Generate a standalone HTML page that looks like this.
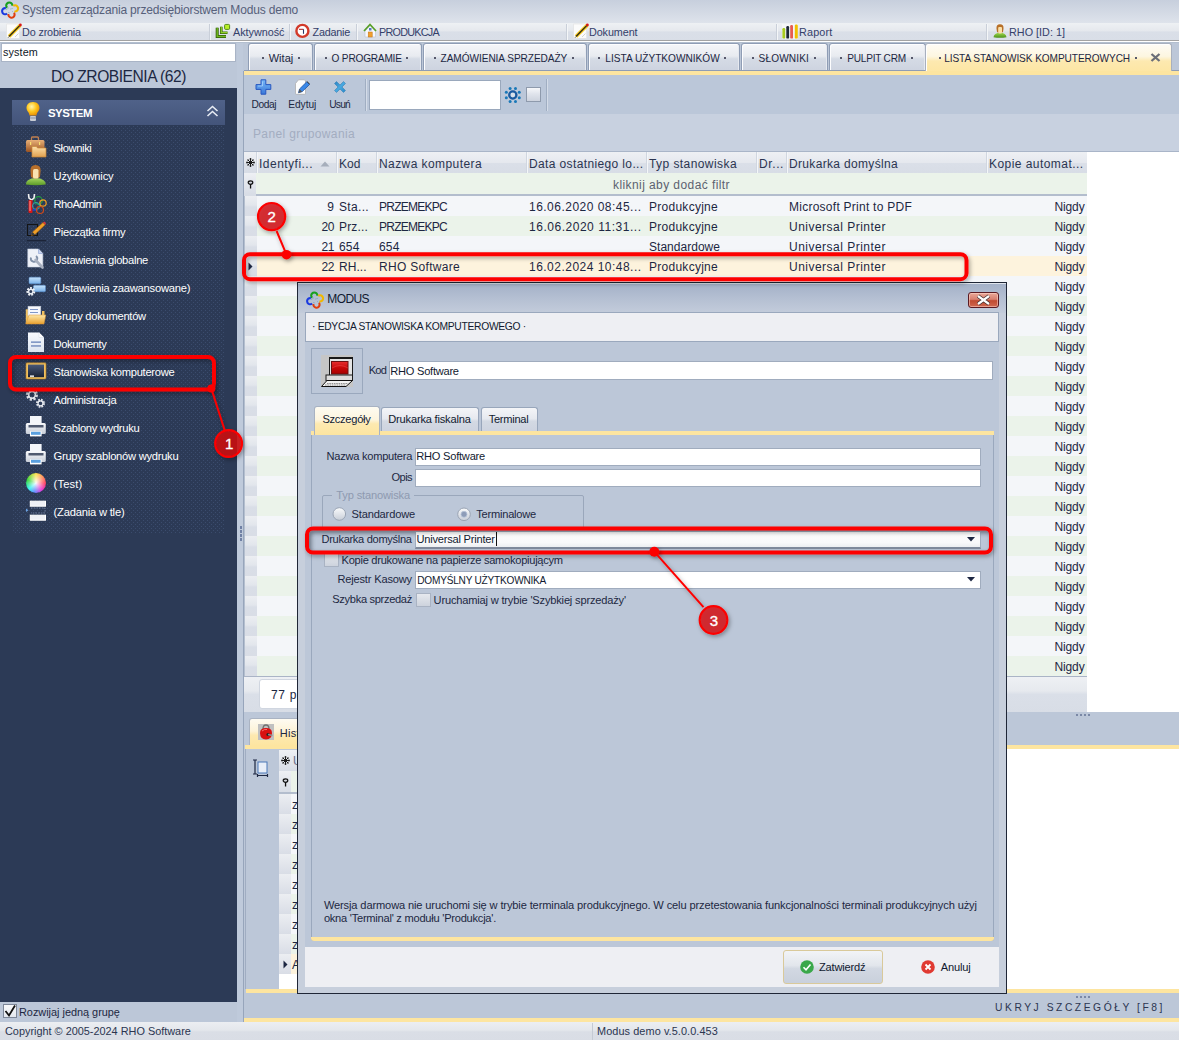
<!DOCTYPE html>
<html><head><meta charset="utf-8">
<style>
*{box-sizing:border-box;margin:0;padding:0}
html,body{width:1179px;height:1040px;overflow:hidden}
body{position:relative;background:#bcc7d8;font-family:"Liberation Sans",sans-serif;color:#1d2742;font-size:11px}
.a{position:absolute}
svg.a{overflow:visible}
.t{position:absolute;white-space:nowrap;line-height:1}
</style></head><body>
<div class="a" style="left:0px;top:0px;width:1179px;height:23px;background:linear-gradient(#c7cfdd,#dee3eb)"></div>
<div class="t" style="left:22px;top:4.44px;font-size:12px;color:#56607a;letter-spacing:-0.173px;">System zarządzania przedsiębiorstwem Modus demo</div>
<svg class="a" style="left:2px;top:2px;" width="17" height="17" viewBox="0 0 17 17"><circle cx="7.3" cy="3.6" r="3.1" fill="none" stroke="#18a020" stroke-width="2.1" stroke-dasharray="12.08 7.40" transform="rotate(-226.6 7.3 3.6)"/><circle cx="13.0" cy="6.4" r="3.1" fill="none" stroke="#f0b800" stroke-width="2.1" stroke-dasharray="12.08 7.40" transform="rotate(-126.6 13.0 6.4)"/><circle cx="9.5" cy="12.6" r="3.1" fill="none" stroke="#e04010" stroke-width="2.1" stroke-dasharray="12.08 7.40" transform="rotate(-36.6 9.5 12.6)"/><circle cx="3.2" cy="9.2" r="3.1" fill="none" stroke="#1a3ae0" stroke-width="2.1" stroke-dasharray="12.08 7.40" transform="rotate(53.4 3.2 9.2)"/><path d="M4.5 7.5 L6.5 6 M8.5 7 L10.5 6.5 M6.5 10.5 L8 11 M10.5 9.5 L11.5 10.5" stroke="#4a8aa0" stroke-width=".7" stroke-dasharray="1 .6"/></svg>
<div class="a" style="left:0px;top:23px;width:1179px;height:17px;background:linear-gradient(#eef1f4,#e5e8ed 47%,#dadfe8 52%,#d9dee7)"></div>
<div class="a" style="left:0px;top:40px;width:1179px;height:1px;background:#a3a3a3"></div>
<div class="a" style="left:0px;top:41px;width:1179px;height:1px;background:#ffffff"></div>
<div class="a" style="left:0px;top:42px;width:1179px;height:1px;background:#b3bfcf"></div>
<div class="a" style="left:209px;top:24px;width:1px;height:16px;background:#c9cfd9"></div>
<div class="a" style="left:210px;top:24px;width:1px;height:16px;background:#f4f6f8"></div>
<div class="a" style="left:289px;top:24px;width:1px;height:16px;background:#c9cfd9"></div>
<div class="a" style="left:290px;top:24px;width:1px;height:16px;background:#f4f6f8"></div>
<div class="a" style="left:356px;top:24px;width:1px;height:16px;background:#c9cfd9"></div>
<div class="a" style="left:357px;top:24px;width:1px;height:16px;background:#f4f6f8"></div>
<div class="a" style="left:566px;top:24px;width:1px;height:16px;background:#c9cfd9"></div>
<div class="a" style="left:567px;top:24px;width:1px;height:16px;background:#f4f6f8"></div>
<div class="a" style="left:776px;top:24px;width:1px;height:16px;background:#c9cfd9"></div>
<div class="a" style="left:777px;top:24px;width:1px;height:16px;background:#f4f6f8"></div>
<div class="a" style="left:986px;top:24px;width:1px;height:16px;background:#c9cfd9"></div>
<div class="a" style="left:987px;top:24px;width:1px;height:16px;background:#f4f6f8"></div>
<div class="t" style="left:22px;top:26.96px;font-size:10.8px;color:#34406a;letter-spacing:-0.136px;">Do zrobienia</div>
<div class="t" style="left:233px;top:26.96px;font-size:10.8px;color:#34406a;letter-spacing:-0.013px;">Aktywność</div>
<div class="t" style="left:312.5px;top:26.96px;font-size:10.8px;color:#34406a;letter-spacing:-0.218px;">Zadanie</div>
<div class="t" style="left:379px;top:26.96px;font-size:10.8px;color:#34406a;letter-spacing:-0.734px;">PRODUKCJA</div>
<div class="t" style="left:589px;top:26.96px;font-size:10.8px;color:#34406a;letter-spacing:-0.090px;">Dokument</div>
<div class="t" style="left:799px;top:26.96px;font-size:10.8px;color:#34406a;letter-spacing:0.181px;">Raport</div>
<div class="t" style="left:1009px;top:26.96px;font-size:10.8px;color:#34406a;letter-spacing:0.017px;">RHO [ID: 1]</div>
<svg class="a" style="left:6px;top:24px;" width="15" height="15" viewBox="0 0 15 15"><rect x="0.7" y="0" width="12.8" height="14.3" fill="#fbfbfb" stroke="#e2e2e2" stroke-width=".6"/><path d="M3 12.5 L14.2 1.2" stroke="#f2c418" stroke-width="3.4"/><path d="M3 12.5 L14.2 1.2" stroke="#1c1c1c" stroke-width="1.1"/><circle cx="14.4" cy="1" r="1.4" fill="#d81818"/><path d="M1.8 14 L3 12.5" stroke="#888" stroke-width="1"/><path d="M9 13 L12.5 9.5" stroke="#c8c8c8" stroke-width=".8"/></svg>
<svg class="a" style="left:573px;top:24px;" width="15" height="15" viewBox="0 0 15 15"><rect x="0.7" y="0" width="12.8" height="14.3" fill="#fbfbfb" stroke="#e2e2e2" stroke-width=".6"/><path d="M3 12.5 L14.2 1.2" stroke="#f2c418" stroke-width="3.4"/><path d="M3 12.5 L14.2 1.2" stroke="#1c1c1c" stroke-width="1.1"/><circle cx="14.4" cy="1" r="1.4" fill="#d81818"/><path d="M1.8 14 L3 12.5" stroke="#888" stroke-width="1"/><path d="M9 13 L12.5 9.5" stroke="#c8c8c8" stroke-width=".8"/></svg>
<svg class="a" style="left:216px;top:24px;" width="14" height="14" viewBox="0 0 14 14"><defs><linearGradient id="ag" x1="0" y1="0" x2="1" y2="1"><stop offset="0" stop-color="#b8f030"/><stop offset="1" stop-color="#5a9a10"/></linearGradient></defs><path d="M1.2 3.8 V12.5 H10" fill="none" stroke="#2f5a08" stroke-width="3"/><path d="M1.2 3.8 V12.5 H10" fill="none" stroke="#70b820" stroke-width="1.4"/><path d="M5.3 2.8 V8.7 H11.5" fill="none" stroke="#3a6a0a" stroke-width="2.6"/><path d="M5.3 2.8 V8.7 H11.5" fill="none" stroke="#90d028" stroke-width="1.2"/><rect x="8.6" y="0.4" width="5" height="5" rx="1" fill="#b8f028" stroke="#4a8010" stroke-width=".9"/></svg>
<svg class="a" style="left:295px;top:23px;" width="15" height="15" viewBox="0 0 15 15"><circle cx="7.4" cy="7.9" r="6" fill="#fff" stroke="#d23a2a" stroke-width="2.4"/><path d="M4 6.3 H8.5" stroke="#b01818" stroke-width="1"/><path d="M8.5 6.3 V10.8" stroke="#283868" stroke-width="1.1"/></svg>
<svg class="a" style="left:363px;top:23px;" width="15" height="15" viewBox="0 0 15 15"><path d="M2 8 V14 H12.5 V8 L7.2 2.8Z" fill="#f6f8fc" stroke="#b8c0d0" stroke-width=".6"/><path d="M1 8 L7 1.4 L13 8" fill="none" stroke="#58a028" stroke-width="1.7"/><rect x="5.2" y="9" width="4" height="5" fill="#f0a030" stroke="#c07010" stroke-width=".5"/><rect x="6" y="5" width="2.5" height="2.5" fill="#5878c0"/></svg>
<svg class="a" style="left:782px;top:24px;" width="16" height="15" viewBox="0 0 16 15"><rect x="0" y="0" width="16" height="15" fill="#fafafa" opacity=".7"/><rect x="0.4" y="4" width="2.8" height="10.6" rx="1.2" fill="#a8cc20"/><rect x="4.3" y="2" width="2.8" height="12.6" rx="1.2" fill="#1c2838"/><rect x="8.2" y="1" width="2.8" height="13.6" rx="1.2" fill="#e85a50"/><rect x="12.8" y="0.5" width="3" height="14.1" rx="1.2" fill="#f0c000"/></svg>
<svg class="a" style="left:993px;top:24px;" width="14" height="14" viewBox="0 0 14 14"><defs><linearGradient id="ub" x1="0" y1="0" x2="0" y2="1"><stop offset="0" stop-color="#a0d850"/><stop offset="1" stop-color="#4a9018"/></linearGradient></defs><path d="M0.5 13.2 Q1 9 7 8.8 Q13 9 13.5 13.2 Q7 14.5 0.5 13.2Z" fill="url(#ub)"/><path d="M3.5 4.5 Q3.2 0.3 7 0.3 Q10.8 0.3 10.5 4.5 L10 8 Q7 10 4 8Z" fill="#b87028"/><rect x="5.2" y="3" width="3.8" height="6.5" rx="1" fill="#fae0a8"/></svg>
<div class="a" style="left:1px;top:43px;width:235px;height:19px;background:#fff;border:1px solid #a9b4c6"></div>
<div class="t" style="left:3px;top:46.96px;font-size:10.8px;color:#101828;letter-spacing:0.133px;">system</div>
<div class="t" style="left:51px;top:68.79px;font-size:15.6px;color:#1d2742;letter-spacing:-0.472px;">DO ZROBIENIA (62)</div>
<div class="a" style="left:0px;top:88px;width:237px;height:914px;background:#2c3a56"></div>
<svg class="a" style="left:12px;top:125px;" width="213" height="408" viewBox="0 0 213 408"><defs><pattern id="dots" x="0" y="0" width="4" height="4" patternUnits="userSpaceOnUse"><rect x="1" y="1" width="1" height="1" fill="#3b4c6d"/><rect x="3" y="3" width="1" height="1" fill="#3b4c6d"/></pattern></defs><rect width="213" height="408" fill="#2c3a56"/><rect width="213" height="408" fill="url(#dots)" shape-rendering="crispEdges"/></svg>
<div class="a" style="left:12px;top:100px;width:213px;height:25px;background:linear-gradient(#506289,#43547a)"></div>
<div class="t" style="left:48px;top:108.07px;font-size:11.5px;color:#ffffff;letter-spacing:-0.548px;font-weight:bold;">SYSTEM</div>
<svg class="a" style="left:206px;top:105px;" width="13" height="12" viewBox="0 0 13 12"><path d="M1.5 6 L6.5 1.5 L11.5 6 M1.5 11 L6.5 6.5 L11.5 11" fill="none" stroke="#e8ecf4" stroke-width="1.6"/></svg>
<svg class="a" style="left:25px;top:101px;" width="16" height="22" viewBox="0 0 16 22"><defs><radialGradient id="bulb" cx="0.4" cy="0.35" r="0.7"><stop offset="0" stop-color="#fff6b0"/><stop offset="0.5" stop-color="#ffc820"/><stop offset="1" stop-color="#e88a00"/></radialGradient></defs><path d="M8 1 C3 1 1.5 4.5 1.5 7 C1.5 10 4.5 11.5 4.5 14.5 H11.5 C11.5 11.5 14.5 10 14.5 7 C14.5 4.5 13 1 8 1Z" fill="url(#bulb)"/><rect x="5" y="15" width="6" height="5" rx="1" fill="#c8ccd4"/><rect x="5" y="16.5" width="6" height="1" fill="#8a90a0"/></svg>
<div class="t" style="left:53.5px;top:143.32px;font-size:11.2px;color:#ffffff;letter-spacing:-0.385px;">Słowniki</div>
<div class="t" style="left:53.5px;top:171.32px;font-size:11.2px;color:#ffffff;letter-spacing:-0.203px;">Użytkownicy</div>
<div class="t" style="left:53.5px;top:199.32px;font-size:11.2px;color:#ffffff;letter-spacing:-0.537px;">RhoAdmin</div>
<div class="t" style="left:53.5px;top:227.32px;font-size:11.2px;color:#ffffff;letter-spacing:-0.262px;">Pieczątka firmy</div>
<div class="t" style="left:53.5px;top:255.32px;font-size:11.2px;color:#ffffff;letter-spacing:-0.297px;">Ustawienia globalne</div>
<div class="t" style="left:53.5px;top:283.32px;font-size:11.2px;color:#ffffff;letter-spacing:-0.222px;">(Ustawienia zaawansowane)</div>
<div class="t" style="left:53.5px;top:311.32px;font-size:11.2px;color:#ffffff;letter-spacing:-0.288px;">Grupy dokumentów</div>
<div class="t" style="left:53.5px;top:339.32px;font-size:11.2px;color:#ffffff;letter-spacing:-0.405px;">Dokumenty</div>
<div class="t" style="left:53.5px;top:367.32px;font-size:11.2px;color:#ffffff;letter-spacing:-0.301px;">Stanowiska komputerowe</div>
<div class="t" style="left:53.5px;top:395.32px;font-size:11.2px;color:#ffffff;letter-spacing:-0.325px;">Administracja</div>
<div class="t" style="left:53.5px;top:423.32px;font-size:11.2px;color:#ffffff;letter-spacing:-0.306px;">Szablony wydruku</div>
<div class="t" style="left:53.5px;top:451.32px;font-size:11.2px;color:#ffffff;letter-spacing:-0.276px;">Grupy szablonów wydruku</div>
<div class="t" style="left:53.5px;top:479.32px;font-size:11.2px;color:#ffffff;letter-spacing:0.167px;">(Test)</div>
<div class="t" style="left:53.5px;top:507.32px;font-size:11.2px;color:#ffffff;letter-spacing:-0.205px;">(Zadania w tle)</div>
<svg class="a" style="left:26px;top:137px;" width="21" height="21" viewBox="0 0 21 21"><defs><linearGradient id="bc1" x1="0" y1="0" x2="0" y2="1"><stop offset="0" stop-color="#e8b078"/><stop offset="1" stop-color="#9a5220"/></linearGradient><linearGradient id="bc2" x1="0" y1="0" x2="0" y2="1"><stop offset="0" stop-color="#fde0a8"/><stop offset="1" stop-color="#e0a050"/></linearGradient></defs><path d="M5.5 3 V1 Q5.5 0 6.5 0 H11.5 Q12.5 0 12.5 1 V3" fill="none" stroke="#c08050" stroke-width="1.3"/><rect x="0" y="3" width="18.5" height="12" rx="1.5" fill="url(#bc1)"/><rect x="4" y="5" width="1.2" height="3" fill="#f8e070"/><rect x="13" y="5" width="1.2" height="3" fill="#f8e070"/><path d="M6 9.5 H10.5 L11.5 11 H20 V20 H6Z" fill="url(#bc2)" stroke="#c88838" stroke-width=".7"/></svg>
<svg class="a" style="left:26px;top:165px;" width="21" height="21" viewBox="0 0 21 21"><defs><linearGradient id="us1" x1="0" y1="0" x2="0" y2="1"><stop offset="0" stop-color="#a8d860"/><stop offset="1" stop-color="#5a9a28"/></linearGradient></defs><path d="M-0.2 19.5 Q0 13.5 9.8 13 Q19.6 13.5 19.8 19.5 Q10 21 -0.2 19.5Z" fill="url(#us1)"/><path d="M4.5 6 Q4 0 9.5 0 Q15 0 14.6 6 L14 12 Q9.5 15 5 12Z" fill="#b8702c"/><rect x="7" y="4" width="5.5" height="9.5" rx="1.5" fill="#fae2b0"/></svg>
<svg class="a" style="left:26px;top:193px;" width="21" height="21" viewBox="0 0 21 21"><path d="M2.5 1 L3 5 L5.5 7 L8 5 L8.5 1" fill="none" stroke="#f0f0f0" stroke-width="1.6"/><rect x="2.5" y="7" width="4" height="13" rx="1" fill="#d81818"/><rect x="3.5" y="8" width="1" height="10" fill="#f8a0a0"/><circle cx="12.5" cy="7.5" r="3.8" fill="none" stroke="#20a040" stroke-width="1.2"/><circle cx="17" cy="10" r="3.2" fill="none" stroke="#f0a020" stroke-width="1.2"/><circle cx="10" cy="13" r="3.5" fill="none" stroke="#30a8b0" stroke-width="1"/><circle cx="14" cy="17" r="3.5" fill="none" stroke="#d04818" stroke-width="1.2"/><path d="M6.5 17 H10" stroke="#2040d0" stroke-width="1.4"/></svg>
<svg class="a" style="left:26px;top:221px;" width="21" height="21" viewBox="0 0 21 21"><rect x="1.5" y="3.5" width="10" height="11" fill="none" stroke="#141414" stroke-width="1"/><path d="M5.5 14.5 L6.5 11 L17 1.5 L19.2 3.7 L9 13.5Z" fill="#f0a028" stroke="#9a5a10" stroke-width=".6"/><path d="M17 1.5 L19.2 3.7 L20 2.5 L18.5 0.5Z" fill="#e03838"/><path d="M5.5 14.5 L6.5 11 L9 13.5Z" fill="#383838"/><rect x="1" y="19" width="19" height="1.2" fill="#1c2438"/></svg>
<svg class="a" style="left:26px;top:249px;" width="21" height="21" viewBox="0 0 21 21"><path d="M1.8 0 H12.5 L16.8 4.5 V18 H1.8Z" fill="#eef1f8" stroke="#c8d0e0" stroke-width=".6"/><path d="M12.5 0 V4.5 H16.8" fill="#c8d4f0" stroke="#8aa0d0" stroke-width=".6"/><path d="M5 8.5 A3.2 3.2 0 1 0 10 7" fill="none" stroke="#8090a8" stroke-width="1.8"/><path d="M9.5 11 L16.5 18.5" stroke="#a8b0c0" stroke-width="2.6" stroke-linecap="round"/></svg>
<svg class="a" style="left:26px;top:277px;" width="21" height="21" viewBox="0 0 21 21"><defs><linearGradient id="uz" x1="0" y1="0" x2="0" y2="1"><stop offset="0" stop-color="#c8e4fc"/><stop offset="1" stop-color="#78b0e8"/></linearGradient></defs><rect x="3" y="0.2" width="11.8" height="6.6" rx="1" fill="url(#uz)" stroke="#5890d0" stroke-width=".5"/><rect x="7.5" y="8.3" width="12" height="6.4" rx="1" fill="url(#uz)" stroke="#5890d0" stroke-width=".5"/><circle cx="4.8" cy="14.5" r="3.2" fill="none" stroke="#f0f2f6" stroke-width="2.4" stroke-dasharray="1.7 1.1"/><circle cx="4.8" cy="14.5" r="2.2" fill="none" stroke="#e8ecf2" stroke-width="1.4"/></svg>
<svg class="a" style="left:26px;top:305px;" width="21" height="21" viewBox="0 0 21 21"><defs><linearGradient id="fd" x1="0" y1="0" x2="0" y2="1"><stop offset="0" stop-color="#fde8a8"/><stop offset="1" stop-color="#e8a030"/></linearGradient></defs><path d="M-0.2 4.3 H3 V19 H-0.2Z" fill="#f0c060"/><rect x="2" y="1.2" width="12.8" height="10" fill="#f6f8fc" stroke="#c0c8d8" stroke-width=".5"/><rect x="4" y="4" width="8" height="1" fill="#8098c8"/><rect x="4" y="7" width="8" height="1" fill="#8098c8"/><path d="M3 10 H19.8 L18 19 H-0.2Z" fill="url(#fd)" stroke="#d89030" stroke-width=".5"/><rect x="16" y="6" width="2.5" height="4" fill="#f0c060"/></svg>
<svg class="a" style="left:26px;top:333px;" width="21" height="21" viewBox="0 0 21 21"><defs><linearGradient id="dk" x1="0" y1="0" x2="0" y2="1"><stop offset="0" stop-color="#f8faff"/><stop offset="1" stop-color="#dce4f0"/></linearGradient></defs><path d="M2 -0.5 H13 L18 4.5 V19 H2Z" fill="url(#dk)"/><path d="M13 -0.5 V4.5 H18" fill="#ffffff" stroke="#d0d8e8" stroke-width=".5"/><rect x="5" y="8.4" width="10" height="1.5" fill="#7890c0"/><rect x="5" y="12.2" width="10" height="1.5" fill="#7890c0"/></svg>
<svg class="a" style="left:26px;top:361px;" width="21" height="21" viewBox="0 0 21 21"><defs><linearGradient id="mn" x1="0" y1="0" x2="0" y2="1"><stop offset="0" stop-color="#485878"/><stop offset="1" stop-color="#1a2234"/></linearGradient></defs><rect x="0" y="1.8" width="20" height="16.2" rx="1" fill="#f0c060" stroke="#b07820" stroke-width=".6"/><rect x="2" y="3.6" width="16" height="12.6" fill="url(#mn)"/><rect x="4" y="14.4" width="4" height="1.5" fill="#f0f0f0"/></svg>
<svg class="a" style="left:26px;top:389px;" width="21" height="21" viewBox="0 0 21 21"><circle cx="6" cy="5.8" r="4.4" fill="none" stroke="#dcdfe6" stroke-width="3.2" stroke-dasharray="2 1.4"/><circle cx="6" cy="5.8" r="3.4" fill="none" stroke="#e6e9ee" stroke-width="1.6"/><circle cx="14.5" cy="14.3" r="3.3" fill="none" stroke="#e0e3ea" stroke-width="2.4" stroke-dasharray="1.6 1"/><circle cx="14.5" cy="14.3" r="2.5" fill="none" stroke="#e8ebf0" stroke-width="1.2"/></svg>
<svg class="a" style="left:26px;top:417px;" width="21" height="21" viewBox="0 0 21 21"><defs><linearGradient id="pr" x1="0" y1="0" x2="0" y2="1"><stop offset="0" stop-color="#f8f9fc"/><stop offset="1" stop-color="#c8ced8"/></linearGradient></defs><rect x="4" y="-1" width="11.6" height="8.5" fill="#f4f6fa"/><rect x="-0.2" y="6" width="20" height="11" rx="1.5" fill="url(#pr)"/><rect x="2.5" y="8" width="15" height="2.5" fill="#505a70"/><rect x="4" y="14.4" width="11.6" height="5" fill="#ffffff"/><rect x="5" y="14.8" width="9.6" height="3" fill="#5aa0e0"/></svg>
<svg class="a" style="left:26px;top:445px;" width="21" height="21" viewBox="0 0 21 21"><rect x="4" y="-1" width="11.6" height="8.5" fill="#f4f6fa"/><rect x="-0.2" y="6" width="20" height="11" rx="1.5" fill="url(#pr)"/><rect x="2.5" y="8" width="15" height="2.5" fill="#505a70"/><rect x="4" y="14.4" width="11.6" height="5" fill="#ffffff"/><rect x="5" y="14.8" width="9.6" height="3" fill="#5aa0e0"/></svg>
<svg class="a" style="left:26px;top:501px;" width="21" height="21" viewBox="0 0 21 21"><rect x="4.3" y="0.2" width="15.2" height="5" fill="#eef0f6" stroke="#ffffff" stroke-width="1"/><rect x="4.3" y="14.2" width="15.2" height="5" fill="#eef0f6" stroke="#ffffff" stroke-width="1"/><path d="M5 7 H19 V12 H5" fill="none" stroke="#8a9ab8" stroke-width=".7" stroke-dasharray="1.5 1.2"/><path d="M0 7.5 L2.5 9.2 L0 11Z" fill="#6aa0e0"/></svg>
<div class="a" style="left:26px;top:473px;width:20px;height:20px;border-radius:50%;background:radial-gradient(circle,rgba(255,255,255,.95) 0,rgba(255,255,255,.35) 45%,rgba(255,255,255,0) 75%),conic-gradient(from 0deg,#ffe040,#ff3050 90deg,#e020d0 140deg,#5080ff 190deg,#20f0f0 230deg,#20d020 290deg,#ffe040 360deg)"></div>
<div class="a" style="left:3px;top:1004px;width:14px;height:14px;background:linear-gradient(#f8f9fb,#e4e8ee);border:1px solid #7d8799"></div>
<svg class="a" style="left:4px;top:1004px;" width="12" height="13" viewBox="0 0 12 13"><path d="M1.5 7 L5 11.5 L11 1.5" fill="none" stroke="#111" stroke-width="1.8"/></svg>
<div class="t" style="left:19px;top:1006.87px;font-size:10.9px;color:#1d2742;letter-spacing:-0.009px;">Rozwijaj jedną grupę</div>
<div class="a" style="left:237px;top:43px;width:6px;height:979px;background:#bfcadb"></div>
<div class="a" style="left:239.5px;top:526px;width:2px;height:2.5px;background:#7080a4"></div>
<div class="a" style="left:239.5px;top:530px;width:2px;height:2.5px;background:#7080a4"></div>
<div class="a" style="left:239.5px;top:534px;width:2px;height:2.5px;background:#7080a4"></div>
<div class="a" style="left:239.5px;top:538px;width:2px;height:2.5px;background:#7080a4"></div>
<div class="a" style="left:248px;top:43px;width:65px;height:28px;background:linear-gradient(#f5f6f9,#e8ebf0 45%,#d5dbe5 55%,#cdd3df);border:1px solid #8f9db5;border-bottom:none;border-radius:3px 3px 0 0;box-shadow:inset 1px 1px 0 #fdfdfe,inset -1px 0 0 #e6e9ef"></div>
<div class="t" style="left:268.7px;top:53.29px;font-size:11px;color:#1d2742;letter-spacing:0.031px;">Witaj</div>
<div class="a" style="left:262px;top:56.5px;width:2px;height:2px;background:#56586a"></div>
<div class="a" style="left:298px;top:56.5px;width:2px;height:2px;background:#56586a"></div>
<div class="a" style="left:314px;top:43px;width:108px;height:28px;background:linear-gradient(#f5f6f9,#e8ebf0 45%,#d5dbe5 55%,#cdd3df);border:1px solid #8f9db5;border-bottom:none;border-radius:3px 3px 0 0;box-shadow:inset 1px 1px 0 #fdfdfe,inset -1px 0 0 #e6e9ef"></div>
<div class="t" style="left:331.6px;top:54.05px;font-size:10.1px;color:#1d2742;letter-spacing:-0.199px;">O PROGRAMIE</div>
<div class="a" style="left:325px;top:56.5px;width:2px;height:2px;background:#56586a"></div>
<div class="a" style="left:406px;top:56.5px;width:2px;height:2px;background:#56586a"></div>
<div class="a" style="left:423px;top:43px;width:164px;height:28px;background:linear-gradient(#f5f6f9,#e8ebf0 45%,#d5dbe5 55%,#cdd3df);border:1px solid #8f9db5;border-bottom:none;border-radius:3px 3px 0 0;box-shadow:inset 1px 1px 0 #fdfdfe,inset -1px 0 0 #e6e9ef"></div>
<div class="t" style="left:440.6px;top:54.05px;font-size:10.1px;color:#1d2742;letter-spacing:-0.062px;">ZAMÓWIENIA SPRZEDAŻY</div>
<div class="a" style="left:434px;top:56.5px;width:2px;height:2px;background:#56586a"></div>
<div class="a" style="left:572px;top:56.5px;width:2px;height:2px;background:#56586a"></div>
<div class="a" style="left:588px;top:43px;width:152px;height:28px;background:linear-gradient(#f5f6f9,#e8ebf0 45%,#d5dbe5 55%,#cdd3df);border:1px solid #8f9db5;border-bottom:none;border-radius:3px 3px 0 0;box-shadow:inset 1px 1px 0 #fdfdfe,inset -1px 0 0 #e6e9ef"></div>
<div class="t" style="left:605.3px;top:54.05px;font-size:10.1px;color:#1d2742;letter-spacing:0.012px;">LISTA UŻYTKOWNIKÓW</div>
<div class="a" style="left:598px;top:56.5px;width:2px;height:2px;background:#56586a"></div>
<div class="a" style="left:724px;top:56.5px;width:2px;height:2px;background:#56586a"></div>
<div class="a" style="left:741px;top:43px;width:87px;height:28px;background:linear-gradient(#f5f6f9,#e8ebf0 45%,#d5dbe5 55%,#cdd3df);border:1px solid #8f9db5;border-bottom:none;border-radius:3px 3px 0 0;box-shadow:inset 1px 1px 0 #fdfdfe,inset -1px 0 0 #e6e9ef"></div>
<div class="t" style="left:758.6px;top:54.05px;font-size:10.1px;color:#1d2742;letter-spacing:0.127px;">SŁOWNIKI</div>
<div class="a" style="left:752px;top:56.5px;width:2px;height:2px;background:#56586a"></div>
<div class="a" style="left:814px;top:56.5px;width:2px;height:2px;background:#56586a"></div>
<div class="a" style="left:829px;top:43px;width:97px;height:28px;background:linear-gradient(#f5f6f9,#e8ebf0 45%,#d5dbe5 55%,#cdd3df);border:1px solid #8f9db5;border-bottom:none;border-radius:3px 3px 0 0;box-shadow:inset 1px 1px 0 #fdfdfe,inset -1px 0 0 #e6e9ef"></div>
<div class="t" style="left:847.2px;top:54.05px;font-size:10.1px;color:#1d2742;letter-spacing:-0.219px;">PULPIT CRM</div>
<div class="a" style="left:840px;top:56.5px;width:2px;height:2px;background:#56586a"></div>
<div class="a" style="left:911px;top:56.5px;width:2px;height:2px;background:#56586a"></div>
<div class="a" style="left:244px;top:70px;width:935px;height:1px;background:#8f9db5"></div>
<div class="a" style="left:925px;top:43px;width:247px;height:32px;background:linear-gradient(#fefcf6,#fdf6e0 40%,#fde9b0 55%,#fde5a0);border:1px solid #a8b0be;border-bottom:none;border-radius:3px 3px 0 0;box-shadow:inset 1px 1px 0 #ffffff"></div>
<div class="t" style="left:944.2px;top:54.05px;font-size:10.1px;color:#1d2742;letter-spacing:-0.075px;">LISTA STANOWISK KOMPUTEROWYCH</div>
<div class="a" style="left:939px;top:56.5px;width:2px;height:2px;background:#56586a"></div>
<div class="a" style="left:1135px;top:56.5px;width:2px;height:2px;background:#56586a"></div>
<svg class="a" style="left:1150px;top:53px;" width="11" height="9" viewBox="0 0 11 9"><path d="M1.5 1 L9.5 8 M9.5 1 L1.5 8" stroke="#6a6e78" stroke-width="2.3"/></svg>
<div class="a" style="left:243px;top:71px;width:1px;height:951px;background:#97a5bb"></div>
<div class="a" style="left:244px;top:71px;width:935px;height:4px;background:#fde5a0"></div>
<div class="a" style="left:244px;top:75px;width:935px;height:39px;background:#bbc7d9"></div>
<div class="a" style="left:244px;top:114px;width:935px;height:38px;background:#c8d1e0"></div>
<div class="t" style="left:253px;top:127.94px;font-size:12px;color:#a3adc0;letter-spacing:0.371px;">Panel grupowania</div>
<div class="a" style="left:365px;top:79px;width:1px;height:32px;background:#a0aec2"></div>
<div class="a" style="left:366px;top:79px;width:1px;height:32px;background:#d4dce8"></div>
<div class="a" style="left:546px;top:79px;width:1px;height:32px;background:#a0aec2"></div>
<div class="a" style="left:547px;top:79px;width:1px;height:32px;background:#d4dce8"></div>
<div class="t" style="left:251.5px;top:100.47px;font-size:10.2px;color:#1d2742;letter-spacing:-0.430px;">Dodaj</div>
<div class="t" style="left:288.2px;top:100.47px;font-size:10.2px;color:#1d2742;letter-spacing:-0.025px;">Edytuj</div>
<div class="t" style="left:329.3px;top:100.47px;font-size:10.2px;color:#1d2742;letter-spacing:-0.803px;">Usuń</div>
<svg class="a" style="left:255px;top:79px;" width="17" height="16" viewBox="0 0 17 16"><defs><linearGradient id="pl" x1="0" y1="0" x2="0" y2="1"><stop offset="0" stop-color="#78b8f8"/><stop offset="1" stop-color="#3a78d8"/></linearGradient></defs><path d="M6 0.8 H10.8 V5.6 H15.8 V10.4 H10.8 V15.2 H6 V10.4 H1 V5.6 H6Z" fill="url(#pl)" stroke="#2858c0" stroke-width="1"/><path d="M7.5 2.5 V7 H3" fill="none" stroke="#b8dcff" stroke-width=".8" opacity=".8"/></svg>
<svg class="a" style="left:294px;top:79px;" width="16" height="16" viewBox="0 0 16 16"><path d="M1.5 4.5 L4.5 0.8 H10.5 L11.5 2 V14.5 Q11.5 15.3 10.5 15.3 H2.5 Q1.5 15.3 1.5 14.5Z" fill="#fdfdfd" stroke="#a8a8a8" stroke-width=".7"/><path d="M4.5 13.8 L5.5 10 L12.8 2.8 L15.5 5.5 L8.2 12.7Z" fill="#3a88e8" stroke="#1a4a98" stroke-width=".7"/><path d="M12.8 2.8 L15.5 5.5 L16 5 L13.3 2.3Z" fill="#333"/><path d="M4.5 13.8 L5.5 10 L8.2 12.7Z" fill="#555"/></svg>
<svg class="a" style="left:333px;top:80px;" width="14" height="14" viewBox="0 0 14 14"><defs><linearGradient id="xg" x1="0" y1="0" x2="1" y2="1"><stop offset="0" stop-color="#2880c0"/><stop offset=".5" stop-color="#48a8e0"/><stop offset="1" stop-color="#2888c8"/></linearGradient></defs><path d="M1.5 3.5 L3.5 1.5 L7 5 L10.5 1.5 L12.5 3.5 L9 7 L12.5 10.5 L10.5 12.5 L7 9 L3.5 12.5 L1.5 10.5 L5 7Z" fill="url(#xg)" stroke="#2a78b0" stroke-width=".5"/></svg>
<div class="a" style="left:369px;top:80px;width:132px;height:30px;background:#fff;border:1px solid #9aa8bc"></div>
<svg class="a" style="left:504px;top:86px;" width="17" height="17" viewBox="0 0 17 17"><circle cx="8.8" cy="9" r="3.6" fill="#d8e0ea" stroke="#1a5aa0" stroke-width="2.3"/><circle cx="8.8" cy="9" r="6" fill="none" stroke="#c8d4e0" stroke-width=".6"/><circle cx="15.27" cy="11.68" r="1.5" fill="#1a78b8"/><circle cx="11.48" cy="15.47" r="1.5" fill="#1a78b8"/><circle cx="6.12" cy="15.47" r="1.5" fill="#1a78b8"/><circle cx="2.33" cy="11.68" r="1.5" fill="#1a78b8"/><circle cx="2.33" cy="6.32" r="1.5" fill="#1a78b8"/><circle cx="6.12" cy="2.53" r="1.5" fill="#1a78b8"/><circle cx="11.48" cy="2.53" r="1.5" fill="#1a78b8"/><circle cx="15.27" cy="6.32" r="1.5" fill="#1a78b8"/></svg>
<div class="a" style="left:526px;top:87px;width:15px;height:15px;background:linear-gradient(#f6f7fa,#e0e4ec 45%,#cdd3de);border:1.5px solid #8e9aac"></div>
<div class="a" style="left:244px;top:152px;width:843px;height:21px;background:linear-gradient(#eef0f4,#e5e8ee 50%,#dadfe8 55%,#d8dde6)"></div>
<div class="a" style="left:244px;top:151px;width:935px;height:1px;background:#a9b5c8"></div>
<div class="a" style="left:256px;top:152px;width:1px;height:21px;background:#d0d6e0"></div>
<div class="a" style="left:257px;top:152px;width:1px;height:21px;background:#f4f6f8"></div>
<div class="a" style="left:336px;top:152px;width:1px;height:21px;background:#d0d6e0"></div>
<div class="a" style="left:337px;top:152px;width:1px;height:21px;background:#f4f6f8"></div>
<div class="a" style="left:376px;top:152px;width:1px;height:21px;background:#d0d6e0"></div>
<div class="a" style="left:377px;top:152px;width:1px;height:21px;background:#f4f6f8"></div>
<div class="a" style="left:526px;top:152px;width:1px;height:21px;background:#d0d6e0"></div>
<div class="a" style="left:527px;top:152px;width:1px;height:21px;background:#f4f6f8"></div>
<div class="a" style="left:646px;top:152px;width:1px;height:21px;background:#d0d6e0"></div>
<div class="a" style="left:647px;top:152px;width:1px;height:21px;background:#f4f6f8"></div>
<div class="a" style="left:756px;top:152px;width:1px;height:21px;background:#d0d6e0"></div>
<div class="a" style="left:757px;top:152px;width:1px;height:21px;background:#f4f6f8"></div>
<div class="a" style="left:786px;top:152px;width:1px;height:21px;background:#d0d6e0"></div>
<div class="a" style="left:787px;top:152px;width:1px;height:21px;background:#f4f6f8"></div>
<div class="a" style="left:986px;top:152px;width:1px;height:21px;background:#d0d6e0"></div>
<div class="a" style="left:987px;top:152px;width:1px;height:21px;background:#f4f6f8"></div>
<svg class="a" style="left:246px;top:158px;" width="9" height="9" viewBox="0 0 9 9"><path d="M4.5 1 V8 M1 4.5 H8 M2 2 L7 7 M7 2 L2 7" stroke="#1a1a1a" stroke-width="1"/><g fill="#1a1a1a"><circle cx="4.5" cy="1" r=".9"/><circle cx="4.5" cy="8" r=".9"/><circle cx="1" cy="4.5" r=".9"/><circle cx="8" cy="4.5" r=".9"/><circle cx="2" cy="2" r=".8"/><circle cx="7" cy="7" r=".8"/><circle cx="7" cy="2" r=".8"/><circle cx="2" cy="7" r=".8"/></g></svg>
<div class="t" style="left:259px;top:158.14px;font-size:12px;color:#2b3550;letter-spacing:0.483px;">Identyfi...</div>
<svg class="a" style="left:320px;top:161px;" width="10" height="6" viewBox="0 0 10 6"><path d="M0.5 5.5 L5 0.5 L9.5 5.5Z" fill="#a6aebb"/></svg>
<div class="t" style="left:339px;top:158.14px;font-size:12px;color:#2b3550;letter-spacing:0.049px;">Kod</div>
<div class="t" style="left:379px;top:158.14px;font-size:12px;color:#2b3550;letter-spacing:0.419px;">Nazwa komputera</div>
<div class="t" style="left:529px;top:158.14px;font-size:12px;color:#2b3550;letter-spacing:0.370px;">Data ostatniego lo...</div>
<div class="t" style="left:649px;top:158.14px;font-size:12px;color:#2b3550;letter-spacing:0.426px;">Typ stanowiska</div>
<div class="t" style="left:759px;top:158.14px;font-size:12px;color:#2b3550;letter-spacing:0.600px;">Dr...</div>
<div class="t" style="left:789px;top:158.14px;font-size:12px;color:#2b3550;letter-spacing:0.331px;">Drukarka domyślna</div>
<div class="t" style="left:989px;top:158.14px;font-size:12px;color:#2b3550;letter-spacing:0.445px;">Kopie automat...</div>
<div class="a" style="left:244px;top:173px;width:843px;height:21px;background:#ebf3ea"></div>
<div class="a" style="left:244px;top:173px;width:12px;height:21px;background:linear-gradient(#eef0f4,#d8dde6)"></div>
<svg class="a" style="left:247px;top:180px;" width="7" height="9" viewBox="0 0 7 9"><ellipse cx="3.5" cy="2.6" rx="2.3" ry="1.7" fill="#d0d4dc" stroke="#111" stroke-width="1.2"/><rect x="2.9" y="4" width="1.3" height="4.5" fill="#111"/></svg>
<div class="t" style="left:613px;top:179.14px;font-size:12px;color:#5c6270;letter-spacing:0.418px;">kliknij aby dodać filtr</div>
<div class="a" style="left:256px;top:194px;width:831px;height:2px;background:#b3bdcd"></div>
<div class="a" style="left:244px;top:194px;width:12px;height:2px;background:#d8dde6"></div>
<div class="a" style="left:257px;top:196px;width:830px;height:20px;background:#f4f6f9"></div>
<div class="a" style="left:244px;top:196px;width:1px;height:20px;background:#b4bfcf"></div>
<div class="a" style="left:245px;top:196px;width:12px;height:20px;background:linear-gradient(#eceef2,#e2e6ec 45%,#d9dee7 55%,#d9dde6)"></div>
<div class="t" style="right:94.5px;top:201.24px;font-size:12px;color:#1d2742;letter-spacing:-0.136px;">Nigdy</div>
<div class="a" style="left:257px;top:216px;width:830px;height:20px;background:#ebf3ea"></div>
<div class="a" style="left:244px;top:216px;width:1px;height:20px;background:#b4bfcf"></div>
<div class="a" style="left:245px;top:216px;width:12px;height:20px;background:linear-gradient(#eceef2,#e2e6ec 45%,#d9dee7 55%,#d9dde6)"></div>
<div class="t" style="right:94.5px;top:221.24px;font-size:12px;color:#1d2742;letter-spacing:-0.136px;">Nigdy</div>
<div class="a" style="left:257px;top:236px;width:830px;height:20px;background:#f4f6f9"></div>
<div class="a" style="left:244px;top:236px;width:1px;height:20px;background:#b4bfcf"></div>
<div class="a" style="left:245px;top:236px;width:12px;height:20px;background:linear-gradient(#eceef2,#e2e6ec 45%,#d9dee7 55%,#d9dde6)"></div>
<div class="t" style="right:94.5px;top:241.24px;font-size:12px;color:#1d2742;letter-spacing:-0.136px;">Nigdy</div>
<div class="a" style="left:257px;top:256px;width:830px;height:20px;background:#fdf3dd"></div>
<div class="a" style="left:244px;top:256px;width:1px;height:20px;background:#b4bfcf"></div>
<div class="a" style="left:245px;top:256px;width:12px;height:20px;background:linear-gradient(#eceef2,#e2e6ec 45%,#d9dee7 55%,#d9dde6)"></div>
<div class="t" style="right:94.5px;top:261.24px;font-size:12px;color:#1d2742;letter-spacing:-0.136px;">Nigdy</div>
<div class="a" style="left:257px;top:276px;width:830px;height:20px;background:#f4f6f9"></div>
<div class="a" style="left:244px;top:276px;width:1px;height:20px;background:#b4bfcf"></div>
<div class="a" style="left:245px;top:276px;width:12px;height:20px;background:linear-gradient(#eceef2,#e2e6ec 45%,#d9dee7 55%,#d9dde6)"></div>
<div class="t" style="right:94.5px;top:281.24px;font-size:12px;color:#1d2742;letter-spacing:-0.136px;">Nigdy</div>
<div class="a" style="left:257px;top:296px;width:830px;height:20px;background:#ebf3ea"></div>
<div class="a" style="left:244px;top:296px;width:1px;height:20px;background:#b4bfcf"></div>
<div class="a" style="left:245px;top:296px;width:12px;height:20px;background:linear-gradient(#eceef2,#e2e6ec 45%,#d9dee7 55%,#d9dde6)"></div>
<div class="t" style="right:94.5px;top:301.24px;font-size:12px;color:#1d2742;letter-spacing:-0.136px;">Nigdy</div>
<div class="a" style="left:257px;top:316px;width:830px;height:20px;background:#f4f6f9"></div>
<div class="a" style="left:244px;top:316px;width:1px;height:20px;background:#b4bfcf"></div>
<div class="a" style="left:245px;top:316px;width:12px;height:20px;background:linear-gradient(#eceef2,#e2e6ec 45%,#d9dee7 55%,#d9dde6)"></div>
<div class="t" style="right:94.5px;top:321.24px;font-size:12px;color:#1d2742;letter-spacing:-0.136px;">Nigdy</div>
<div class="a" style="left:257px;top:336px;width:830px;height:20px;background:#ebf3ea"></div>
<div class="a" style="left:244px;top:336px;width:1px;height:20px;background:#b4bfcf"></div>
<div class="a" style="left:245px;top:336px;width:12px;height:20px;background:linear-gradient(#eceef2,#e2e6ec 45%,#d9dee7 55%,#d9dde6)"></div>
<div class="t" style="right:94.5px;top:341.24px;font-size:12px;color:#1d2742;letter-spacing:-0.136px;">Nigdy</div>
<div class="a" style="left:257px;top:356px;width:830px;height:20px;background:#f4f6f9"></div>
<div class="a" style="left:244px;top:356px;width:1px;height:20px;background:#b4bfcf"></div>
<div class="a" style="left:245px;top:356px;width:12px;height:20px;background:linear-gradient(#eceef2,#e2e6ec 45%,#d9dee7 55%,#d9dde6)"></div>
<div class="t" style="right:94.5px;top:361.24px;font-size:12px;color:#1d2742;letter-spacing:-0.136px;">Nigdy</div>
<div class="a" style="left:257px;top:376px;width:830px;height:20px;background:#ebf3ea"></div>
<div class="a" style="left:244px;top:376px;width:1px;height:20px;background:#b4bfcf"></div>
<div class="a" style="left:245px;top:376px;width:12px;height:20px;background:linear-gradient(#eceef2,#e2e6ec 45%,#d9dee7 55%,#d9dde6)"></div>
<div class="t" style="right:94.5px;top:381.24px;font-size:12px;color:#1d2742;letter-spacing:-0.136px;">Nigdy</div>
<div class="a" style="left:257px;top:396px;width:830px;height:20px;background:#f4f6f9"></div>
<div class="a" style="left:244px;top:396px;width:1px;height:20px;background:#b4bfcf"></div>
<div class="a" style="left:245px;top:396px;width:12px;height:20px;background:linear-gradient(#eceef2,#e2e6ec 45%,#d9dee7 55%,#d9dde6)"></div>
<div class="t" style="right:94.5px;top:401.24px;font-size:12px;color:#1d2742;letter-spacing:-0.136px;">Nigdy</div>
<div class="a" style="left:257px;top:416px;width:830px;height:20px;background:#ebf3ea"></div>
<div class="a" style="left:244px;top:416px;width:1px;height:20px;background:#b4bfcf"></div>
<div class="a" style="left:245px;top:416px;width:12px;height:20px;background:linear-gradient(#eceef2,#e2e6ec 45%,#d9dee7 55%,#d9dde6)"></div>
<div class="t" style="right:94.5px;top:421.24px;font-size:12px;color:#1d2742;letter-spacing:-0.136px;">Nigdy</div>
<div class="a" style="left:257px;top:436px;width:830px;height:20px;background:#f4f6f9"></div>
<div class="a" style="left:244px;top:436px;width:1px;height:20px;background:#b4bfcf"></div>
<div class="a" style="left:245px;top:436px;width:12px;height:20px;background:linear-gradient(#eceef2,#e2e6ec 45%,#d9dee7 55%,#d9dde6)"></div>
<div class="t" style="right:94.5px;top:441.24px;font-size:12px;color:#1d2742;letter-spacing:-0.136px;">Nigdy</div>
<div class="a" style="left:257px;top:456px;width:830px;height:20px;background:#ebf3ea"></div>
<div class="a" style="left:244px;top:456px;width:1px;height:20px;background:#b4bfcf"></div>
<div class="a" style="left:245px;top:456px;width:12px;height:20px;background:linear-gradient(#eceef2,#e2e6ec 45%,#d9dee7 55%,#d9dde6)"></div>
<div class="t" style="right:94.5px;top:461.24px;font-size:12px;color:#1d2742;letter-spacing:-0.136px;">Nigdy</div>
<div class="a" style="left:257px;top:476px;width:830px;height:20px;background:#f4f6f9"></div>
<div class="a" style="left:244px;top:476px;width:1px;height:20px;background:#b4bfcf"></div>
<div class="a" style="left:245px;top:476px;width:12px;height:20px;background:linear-gradient(#eceef2,#e2e6ec 45%,#d9dee7 55%,#d9dde6)"></div>
<div class="t" style="right:94.5px;top:481.24px;font-size:12px;color:#1d2742;letter-spacing:-0.136px;">Nigdy</div>
<div class="a" style="left:257px;top:496px;width:830px;height:20px;background:#ebf3ea"></div>
<div class="a" style="left:244px;top:496px;width:1px;height:20px;background:#b4bfcf"></div>
<div class="a" style="left:245px;top:496px;width:12px;height:20px;background:linear-gradient(#eceef2,#e2e6ec 45%,#d9dee7 55%,#d9dde6)"></div>
<div class="t" style="right:94.5px;top:501.24px;font-size:12px;color:#1d2742;letter-spacing:-0.136px;">Nigdy</div>
<div class="a" style="left:257px;top:516px;width:830px;height:20px;background:#f4f6f9"></div>
<div class="a" style="left:244px;top:516px;width:1px;height:20px;background:#b4bfcf"></div>
<div class="a" style="left:245px;top:516px;width:12px;height:20px;background:linear-gradient(#eceef2,#e2e6ec 45%,#d9dee7 55%,#d9dde6)"></div>
<div class="t" style="right:94.5px;top:521.24px;font-size:12px;color:#1d2742;letter-spacing:-0.136px;">Nigdy</div>
<div class="a" style="left:257px;top:536px;width:830px;height:20px;background:#ebf3ea"></div>
<div class="a" style="left:244px;top:536px;width:1px;height:20px;background:#b4bfcf"></div>
<div class="a" style="left:245px;top:536px;width:12px;height:20px;background:linear-gradient(#eceef2,#e2e6ec 45%,#d9dee7 55%,#d9dde6)"></div>
<div class="t" style="right:94.5px;top:541.24px;font-size:12px;color:#1d2742;letter-spacing:-0.136px;">Nigdy</div>
<div class="a" style="left:257px;top:556px;width:830px;height:20px;background:#f4f6f9"></div>
<div class="a" style="left:244px;top:556px;width:1px;height:20px;background:#b4bfcf"></div>
<div class="a" style="left:245px;top:556px;width:12px;height:20px;background:linear-gradient(#eceef2,#e2e6ec 45%,#d9dee7 55%,#d9dde6)"></div>
<div class="t" style="right:94.5px;top:561.24px;font-size:12px;color:#1d2742;letter-spacing:-0.136px;">Nigdy</div>
<div class="a" style="left:257px;top:576px;width:830px;height:20px;background:#ebf3ea"></div>
<div class="a" style="left:244px;top:576px;width:1px;height:20px;background:#b4bfcf"></div>
<div class="a" style="left:245px;top:576px;width:12px;height:20px;background:linear-gradient(#eceef2,#e2e6ec 45%,#d9dee7 55%,#d9dde6)"></div>
<div class="t" style="right:94.5px;top:581.24px;font-size:12px;color:#1d2742;letter-spacing:-0.136px;">Nigdy</div>
<div class="a" style="left:257px;top:596px;width:830px;height:20px;background:#f4f6f9"></div>
<div class="a" style="left:244px;top:596px;width:1px;height:20px;background:#b4bfcf"></div>
<div class="a" style="left:245px;top:596px;width:12px;height:20px;background:linear-gradient(#eceef2,#e2e6ec 45%,#d9dee7 55%,#d9dde6)"></div>
<div class="t" style="right:94.5px;top:601.24px;font-size:12px;color:#1d2742;letter-spacing:-0.136px;">Nigdy</div>
<div class="a" style="left:257px;top:616px;width:830px;height:20px;background:#ebf3ea"></div>
<div class="a" style="left:244px;top:616px;width:1px;height:20px;background:#b4bfcf"></div>
<div class="a" style="left:245px;top:616px;width:12px;height:20px;background:linear-gradient(#eceef2,#e2e6ec 45%,#d9dee7 55%,#d9dde6)"></div>
<div class="t" style="right:94.5px;top:621.24px;font-size:12px;color:#1d2742;letter-spacing:-0.136px;">Nigdy</div>
<div class="a" style="left:257px;top:636px;width:830px;height:20px;background:#f4f6f9"></div>
<div class="a" style="left:244px;top:636px;width:1px;height:20px;background:#b4bfcf"></div>
<div class="a" style="left:245px;top:636px;width:12px;height:20px;background:linear-gradient(#eceef2,#e2e6ec 45%,#d9dee7 55%,#d9dde6)"></div>
<div class="t" style="right:94.5px;top:641.24px;font-size:12px;color:#1d2742;letter-spacing:-0.136px;">Nigdy</div>
<div class="a" style="left:257px;top:656px;width:830px;height:20px;background:#ebf3ea"></div>
<div class="a" style="left:244px;top:656px;width:1px;height:20px;background:#b4bfcf"></div>
<div class="a" style="left:245px;top:656px;width:12px;height:20px;background:linear-gradient(#eceef2,#e2e6ec 45%,#d9dee7 55%,#d9dde6)"></div>
<div class="t" style="right:94.5px;top:661.24px;font-size:12px;color:#1d2742;letter-spacing:-0.136px;">Nigdy</div>
<div class="t" style="right:845px;top:201.24px;font-size:12px;color:#1d2742;letter-spacing:0.000px;">9</div>
<div class="t" style="left:339px;top:201.24px;font-size:12px;color:#1d2742;letter-spacing:0.331px;">Sta...</div>
<div class="t" style="left:379px;top:201.24px;font-size:12px;color:#1d2742;letter-spacing:-0.742px;">PRZEMEKPC</div>
<div class="t" style="left:529px;top:201.24px;font-size:12px;color:#1d2742;letter-spacing:0.478px;">16.06.2020 08:45...</div>
<div class="t" style="left:649px;top:201.24px;font-size:12px;color:#1d2742;letter-spacing:0.269px;">Produkcyjne</div>
<div class="t" style="left:789px;top:201.24px;font-size:12px;color:#1d2742;letter-spacing:0.256px;">Microsoft Print to PDF</div>
<div class="t" style="right:845px;top:221.24px;font-size:12px;color:#1d2742;letter-spacing:-0.424px;">20</div>
<div class="t" style="left:339px;top:221.24px;font-size:12px;color:#1d2742;letter-spacing:0.166px;">Prz...</div>
<div class="t" style="left:379px;top:221.24px;font-size:12px;color:#1d2742;letter-spacing:-0.742px;">PRZEMEKPC</div>
<div class="t" style="left:529px;top:221.24px;font-size:12px;color:#1d2742;letter-spacing:0.525px;">16.06.2020 11:31...</div>
<div class="t" style="left:649px;top:221.24px;font-size:12px;color:#1d2742;letter-spacing:0.269px;">Produkcyjne</div>
<div class="t" style="left:789px;top:221.24px;font-size:12px;color:#1d2742;letter-spacing:0.489px;">Universal Printer</div>
<div class="t" style="right:845px;top:241.24px;font-size:12px;color:#1d2742;letter-spacing:-0.424px;">21</div>
<div class="t" style="left:339px;top:241.24px;font-size:12px;color:#1d2742;letter-spacing:0.159px;">654</div>
<div class="t" style="left:379px;top:241.24px;font-size:12px;color:#1d2742;letter-spacing:0.159px;">654</div>
<div class="t" style="left:649px;top:241.24px;font-size:12px;color:#1d2742;letter-spacing:0.026px;">Standardowe</div>
<div class="t" style="left:789px;top:241.24px;font-size:12px;color:#1d2742;letter-spacing:0.489px;">Universal Printer</div>
<div class="t" style="right:845px;top:261.24px;font-size:12px;color:#1d2742;letter-spacing:-0.424px;">22</div>
<div class="t" style="left:339px;top:261.24px;font-size:12px;color:#1d2742;letter-spacing:0.033px;">RH...</div>
<div class="t" style="left:379px;top:261.24px;font-size:12px;color:#1d2742;letter-spacing:0.304px;">RHO Software</div>
<div class="t" style="left:529px;top:261.24px;font-size:12px;color:#1d2742;letter-spacing:0.478px;">16.02.2024 10:48...</div>
<div class="t" style="left:649px;top:261.24px;font-size:12px;color:#1d2742;letter-spacing:0.269px;">Produkcyjne</div>
<div class="t" style="left:789px;top:261.24px;font-size:12px;color:#1d2742;letter-spacing:0.489px;">Universal Printer</div>
<svg class="a" style="left:248px;top:262px;" width="5" height="9" viewBox="0 0 5 9"><path d="M0.5 0.5 L4.5 4.5 L0.5 8.5Z" fill="#1d2742"/></svg>
<div class="a" style="left:244px;top:676px;width:843px;height:1px;background:#aab4c6"></div>
<div class="a" style="left:244px;top:677px;width:843px;height:35px;background:linear-gradient(#eef0f4,#e6e9ee 40%,#dadfe8 50%,#d8dde6)"></div>
<div class="a" style="left:259px;top:679px;width:60px;height:30px;background:#fff;border:1px solid #d0d6e0;border-radius:3px"></div>
<div class="t" style="left:271px;top:689.44px;font-size:12px;color:#1d2742;letter-spacing:0.661px;">77 p</div>
<div class="a" style="left:1087px;top:152px;width:92px;height:560px;background:#ffffff"></div>
<div class="a" style="left:1076px;top:714px;width:2px;height:2px;background:#7a88a6"></div>
<div class="a" style="left:1080px;top:714px;width:2px;height:2px;background:#7a88a6"></div>
<div class="a" style="left:1084px;top:714px;width:2px;height:2px;background:#7a88a6"></div>
<div class="a" style="left:1088px;top:714px;width:2px;height:2px;background:#7a88a6"></div>
<div class="a" style="left:249px;top:718px;width:70px;height:28px;background:linear-gradient(#fefbf2,#fdf3d8 45%,#fde9b0 60%,#fde5a0);border:1px solid #aab3c2;border-bottom:none;border-radius:3px 3px 0 0"></div>
<svg class="a" style="left:258px;top:724px;" width="16" height="16" viewBox="0 0 16 16"><rect x="0" y="0" width="16" height="16" fill="#c0c0c0"/><path d="M5 5 Q5 1 8 1 Q11 1 11 5" fill="none" stroke="#707070" stroke-width="1.3"/><path d="M2 9 Q2 4 8 4 Q14 4 14 9 Q14 15 8 15.5 Q2 15 2 9Z" fill="#d81010"/><path d="M4 7 Q6 5 9 5.5" fill="none" stroke="#f87070" stroke-width="1"/><circle cx="10" cy="10.5" r="1.6" fill="#222"/><path d="M10 10.5 L14.5 11.5" stroke="#909090" stroke-width="1.5"/></svg>
<div class="t" style="left:279.8px;top:727.69px;font-size:11px;color:#1d2742;letter-spacing:0.264px;">Hist</div>
<div class="a" style="left:245px;top:745px;width:934px;height:4px;background:#fde5a0"></div>
<div class="a" style="left:245px;top:749px;width:1px;height:240px;background:#a0adc2"></div>
<div class="a" style="left:246px;top:749px;width:933px;height:240px;background:#bcc7d8"></div>
<svg class="a" style="left:252px;top:759px;" width="16" height="18" viewBox="0 0 16 18"><path d="M1 1 H5 M3 1 V15 M1 15 H5" stroke="#1d2742" stroke-width="1.2"/><rect x="6" y="3" width="9" height="11" fill="#e8eef8" stroke="#4a78b8" stroke-width="1"/><path d="M5 16.5 H16 M5.5 15 V18 M15.5 15 V18" stroke="#1d2742" stroke-width="1.2"/></svg>
<div class="a" style="left:279px;top:750px;width:728px;height:21px;background:linear-gradient(#eef0f4,#d8dde6)"></div>
<div class="a" style="left:279px;top:771px;width:728px;height:21px;background:#ebf3ea"></div>
<div class="a" style="left:279px;top:771px;width:12px;height:21px;background:linear-gradient(#eef0f4,#d8dde6)"></div>
<div class="a" style="left:279px;top:792px;width:728px;height:2px;background:#b3bdcd"></div>
<svg class="a" style="left:281px;top:756px;" width="9" height="9" viewBox="0 0 9 9"><path d="M4.5 1 V8 M1 4.5 H8 M2 2 L7 7 M7 2 L2 7" stroke="#1a1a1a" stroke-width="1"/><g fill="#1a1a1a"><circle cx="4.5" cy="1" r=".9"/><circle cx="4.5" cy="8" r=".9"/><circle cx="1" cy="4.5" r=".9"/><circle cx="8" cy="4.5" r=".9"/><circle cx="2" cy="2" r=".8"/><circle cx="7" cy="7" r=".8"/><circle cx="7" cy="2" r=".8"/><circle cx="2" cy="7" r=".8"/></g></svg>
<svg class="a" style="left:282px;top:778px;" width="7" height="9" viewBox="0 0 7 9"><ellipse cx="3.5" cy="2.6" rx="2.3" ry="1.7" fill="#d0d4dc" stroke="#111" stroke-width="1.2"/><rect x="2.9" y="4" width="1.3" height="4.5" fill="#111"/></svg>
<div class="t" style="left:293px;top:755.44px;font-size:12px;color:#6a7088;letter-spacing:0.000px;">U</div>
<div class="a" style="left:291px;top:794px;width:716px;height:20px;background:#f4f6f9"></div>
<div class="a" style="left:279px;top:794px;width:12px;height:20px;background:linear-gradient(#eceef2,#d9dde6)"></div>
<div class="t" style="left:292px;top:799.24px;font-size:12px;color:#1d2742;letter-spacing:0.000px;">z</div>
<div class="a" style="left:291px;top:814px;width:716px;height:20px;background:#ebf3ea"></div>
<div class="a" style="left:279px;top:814px;width:12px;height:20px;background:linear-gradient(#eceef2,#d9dde6)"></div>
<div class="t" style="left:292px;top:819.24px;font-size:12px;color:#1d2742;letter-spacing:0.000px;">z</div>
<div class="a" style="left:291px;top:834px;width:716px;height:20px;background:#f4f6f9"></div>
<div class="a" style="left:279px;top:834px;width:12px;height:20px;background:linear-gradient(#eceef2,#d9dde6)"></div>
<div class="t" style="left:292px;top:839.24px;font-size:12px;color:#1d2742;letter-spacing:0.000px;">z</div>
<div class="a" style="left:291px;top:854px;width:716px;height:20px;background:#ebf3ea"></div>
<div class="a" style="left:279px;top:854px;width:12px;height:20px;background:linear-gradient(#eceef2,#d9dde6)"></div>
<div class="t" style="left:292px;top:859.24px;font-size:12px;color:#1d2742;letter-spacing:0.000px;">z</div>
<div class="a" style="left:291px;top:874px;width:716px;height:20px;background:#f4f6f9"></div>
<div class="a" style="left:279px;top:874px;width:12px;height:20px;background:linear-gradient(#eceef2,#d9dde6)"></div>
<div class="t" style="left:292px;top:879.24px;font-size:12px;color:#1d2742;letter-spacing:0.000px;">z</div>
<div class="a" style="left:291px;top:894px;width:716px;height:20px;background:#ebf3ea"></div>
<div class="a" style="left:279px;top:894px;width:12px;height:20px;background:linear-gradient(#eceef2,#d9dde6)"></div>
<div class="t" style="left:292px;top:899.24px;font-size:12px;color:#1d2742;letter-spacing:0.000px;">z</div>
<div class="a" style="left:291px;top:914px;width:716px;height:20px;background:#f4f6f9"></div>
<div class="a" style="left:279px;top:914px;width:12px;height:20px;background:linear-gradient(#eceef2,#d9dde6)"></div>
<div class="t" style="left:292px;top:919.24px;font-size:12px;color:#1d2742;letter-spacing:0.000px;">z</div>
<div class="a" style="left:291px;top:934px;width:716px;height:20px;background:#ebf3ea"></div>
<div class="a" style="left:279px;top:934px;width:12px;height:20px;background:linear-gradient(#eceef2,#d9dde6)"></div>
<div class="t" style="left:292px;top:939.24px;font-size:12px;color:#1d2742;letter-spacing:0.000px;">z</div>
<div class="a" style="left:291px;top:954px;width:716px;height:20px;background:#fdf3dd"></div>
<div class="a" style="left:279px;top:954px;width:12px;height:20px;background:linear-gradient(#eceef2,#d9dde6)"></div>
<div class="t" style="left:292px;top:959.24px;font-size:12px;color:#1d2742;letter-spacing:0.000px;">A</div>
<svg class="a" style="left:283px;top:960px;" width="5" height="9" viewBox="0 0 5 9"><path d="M0.5 0.5 L4.5 4.5 L0.5 8.5Z" fill="#1d2742"/></svg>
<div class="a" style="left:279px;top:974px;width:728px;height:15px;background:#ffffff"></div>
<div class="a" style="left:1007px;top:749px;width:172px;height:240px;background:#ffffff"></div>
<div class="a" style="left:246px;top:989px;width:933px;height:4px;background:#fde5a0"></div>
<div class="a" style="left:244px;top:993px;width:935px;height:25px;background:#bcc7d8"></div>
<div class="t" style="left:995px;top:1003.38px;font-size:10.3px;color:#2b3550;letter-spacing:2.538px;">UKRYJ SZCZEGÓŁY [F8]</div>
<div class="a" style="left:1076px;top:996px;width:2px;height:2px;background:#7a88a6"></div>
<div class="a" style="left:1080px;top:996px;width:2px;height:2px;background:#7a88a6"></div>
<div class="a" style="left:1084px;top:996px;width:2px;height:2px;background:#7a88a6"></div>
<div class="a" style="left:1088px;top:996px;width:2px;height:2px;background:#7a88a6"></div>
<div class="a" style="left:244px;top:1018px;width:935px;height:4px;background:#fde5a0"></div>
<div class="a" style="left:297px;top:282px;width:710px;height:712px;background:#c7cfdc;border:1px solid #1f2636"></div>
<div class="a" style="left:298px;top:283px;width:708px;height:30px;background:linear-gradient(#a3b0c7,#b4bfd2 50%,#c3ccdb)"></div>
<div class="a" style="left:298px;top:283px;width:708px;height:1px;background:#dfe4ec"></div>
<svg class="a" style="left:306.8px;top:291.8px;" width="17" height="17" viewBox="0 0 17 17"><circle cx="7.3" cy="3.6" r="3.1" fill="none" stroke="#18a020" stroke-width="2.1" stroke-dasharray="12.08 7.40" transform="rotate(-226.6 7.3 3.6)"/><circle cx="13.0" cy="6.4" r="3.1" fill="none" stroke="#f0b800" stroke-width="2.1" stroke-dasharray="12.08 7.40" transform="rotate(-126.6 13.0 6.4)"/><circle cx="9.5" cy="12.6" r="3.1" fill="none" stroke="#e04010" stroke-width="2.1" stroke-dasharray="12.08 7.40" transform="rotate(-36.6 9.5 12.6)"/><circle cx="3.2" cy="9.2" r="3.1" fill="none" stroke="#1a3ae0" stroke-width="2.1" stroke-dasharray="12.08 7.40" transform="rotate(53.4 3.2 9.2)"/><path d="M4.5 7.5 L6.5 6 M8.5 7 L10.5 6.5 M6.5 10.5 L8 11 M10.5 9.5 L11.5 10.5" stroke="#4a8aa0" stroke-width=".7" stroke-dasharray="1 .6"/></svg>
<div class="t" style="left:327.3px;top:293.34px;font-size:12px;color:#111a30;letter-spacing:-0.593px;">MODUS</div>
<div class="a" style="left:968px;top:292px;width:31px;height:16px;background:linear-gradient(#eaa898,#d88070 45%,#c04a30 55%,#d06850);border:1px solid #5a1a22;border-radius:3px;box-shadow:inset 0 0 0 1px rgba(255,220,210,.5)"></div>
<svg class="a" style="left:976px;top:295px;" width="15" height="10" viewBox="0 0 15 10"><path d="M2 1 L13 9 M13 1 L2 9" stroke="#3a2a2a" stroke-width="3.6"/><path d="M2 1 L13 9 M13 1 L2 9" stroke="#ffffff" stroke-width="2.2"/></svg>
<div class="a" style="left:305px;top:312px;width:694px;height:635px;background:#bcc7d8"></div>
<div class="a" style="left:305px;top:312px;width:694px;height:30px;background:#eeeff3;border:1px solid #9aa8bd"></div>
<div class="t" style="left:312px;top:322.08px;font-size:10.3px;color:#111a30;letter-spacing:-0.306px;">· EDYCJA STANOWISKA KOMPUTEROWEGO ·</div>
<div class="a" style="left:311px;top:348px;width:52px;height:46px;border:1px solid #9aa8bd"></div>
<div class="a" style="left:321px;top:355px;width:32px;height:32px;background:#c6c6c6"></div>
<svg class="a" style="left:321px;top:355px;" width="32" height="32" viewBox="0 0 32 32"><defs><linearGradient id="scr" x1="0" y1="0" x2="0" y2="1"><stop offset="0" stop-color="#e83030"/><stop offset=".5" stop-color="#c80808"/><stop offset="1" stop-color="#a80000"/></linearGradient></defs><rect x="8.5" y="2.5" width="23" height="18" fill="#e4e4e4" stroke="#1a1a1a" stroke-width="1"/><rect x="8.5" y="2.5" width="23" height="1.5" fill="#1a1a1a"/><rect x="10.5" y="6.5" width="16.5" height="12.5" fill="url(#scr)" stroke="#6a1010" stroke-width="1"/><path d="M11 13 Q19 8 27 13" fill="none" stroke="#f05050" stroke-width=".8" opacity=".6"/><rect x="5" y="20" width="26.5" height="5.5" fill="#dcdcdc" stroke="#1a1a1a" stroke-width="1"/><path d="M0.5 31.5 L6 25.5 H31.5 L25 31.5Z" fill="#f2f2f2" stroke="#111" stroke-width="1"/><path d="M6 28.5 H27 M4 30 H25" stroke="#888" stroke-width=".9" stroke-dasharray="1.6 .7"/></svg>
<div class="t" style="left:368.7px;top:365.00px;font-size:11.1px;color:#1d2742;letter-spacing:-0.750px;">Kod</div>
<div class="a" style="left:389px;top:361px;width:604px;height:19px;background:#fff;border:1px solid #a0acbe"></div>
<div class="t" style="left:390.3px;top:365.50px;font-size:11.1px;color:#111a30;letter-spacing:-0.255px;">RHO Software</div>
<div class="a" style="left:381px;top:407px;width:98px;height:25px;background:linear-gradient(#f4f5f8,#e6e9ef 45%,#d3d9e3 55%,#cdd3df);border:1px solid #98a6bb;border-bottom:none;border-radius:3px 3px 0 0"></div>
<div class="a" style="left:481px;top:407px;width:57px;height:25px;background:linear-gradient(#f4f5f8,#e6e9ef 45%,#d3d9e3 55%,#cdd3df);border:1px solid #98a6bb;border-bottom:none;border-radius:3px 3px 0 0"></div>
<div class="a" style="left:311px;top:431px;width:683px;height:510px;background:#bcc7d8;border:1px solid #9aa8bd;border-top:none;border-radius:0 0 3px 3px"></div>
<div class="a" style="left:311px;top:431px;width:683px;height:4px;background:#fde5a0"></div>
<div class="a" style="left:311px;top:937px;width:683px;height:4px;background:#fde5a0;border-radius:0 0 3px 3px"></div>
<div class="a" style="left:314px;top:406px;width:66px;height:29px;background:linear-gradient(#fefbf2,#fdf5df 45%,#fde9b0 60%,#fde5a0);border:1px solid #a8b2c2;border-bottom:none;border-radius:3px 3px 0 0"></div>
<div class="t" style="left:322.4px;top:413.70px;font-size:11.1px;color:#111a30;letter-spacing:-0.266px;">Szczegóły</div>
<div class="t" style="left:388.3px;top:413.70px;font-size:11.1px;color:#111a30;letter-spacing:-0.197px;">Drukarka fiskalna</div>
<div class="t" style="left:488.7px;top:413.70px;font-size:11.1px;color:#111a30;letter-spacing:-0.281px;">Terminal</div>
<div class="t" style="left:326.5px;top:451.20px;font-size:11.1px;color:#1d2742;letter-spacing:-0.250px;">Nazwa komputera</div>
<div class="a" style="left:415px;top:448px;width:566px;height:18px;background:#fff;border:1px solid #a0acbe"></div>
<div class="t" style="left:416.3px;top:450.90px;font-size:11.1px;color:#111a30;letter-spacing:-0.238px;">RHO Software</div>
<div class="t" style="left:391.5px;top:472.20px;font-size:11.1px;color:#1d2742;letter-spacing:-0.581px;">Opis</div>
<div class="a" style="left:415px;top:469px;width:566px;height:18px;background:#fff;border:1px solid #a0acbe"></div>
<div class="a" style="left:322px;top:495px;width:262px;height:40px;border:1px solid #9aa7bb;border-radius:2px"></div>
<div class="a" style="left:332px;top:490px;width:82px;height:10px;background:#bcc7d8"></div>
<div class="t" style="left:336.3px;top:489.80px;font-size:11.1px;color:#8e9ab0;letter-spacing:-0.156px;">Typ stanowiska</div>
<svg class="a" style="left:332px;top:507px;" width="15" height="15" viewBox="0 0 15 15"><defs><linearGradient id="rg" x1="0" y1="0" x2="0" y2="1"><stop offset="0" stop-color="#fafbfc"/><stop offset="1" stop-color="#c8ced8"/></linearGradient></defs><circle cx="7.3" cy="7" r="6.3" fill="url(#rg)" stroke="#9aa4b4" stroke-width="1"/></svg>
<div class="t" style="left:351.5px;top:508.90px;font-size:11.1px;color:#1d2742;letter-spacing:-0.174px;">Standardowe</div>
<svg class="a" style="left:457px;top:507px;" width="15" height="15" viewBox="0 0 15 15"><circle cx="7" cy="7.3" r="6.3" fill="url(#rg)" stroke="#9aa4b4" stroke-width="1"/><circle cx="7" cy="7.3" r="3" fill="#8d9cb8" stroke="#b8c4d8" stroke-width=".8"/></svg>
<div class="t" style="left:476.3px;top:509.20px;font-size:11.1px;color:#1d2742;letter-spacing:-0.237px;">Terminalowe</div>
<div class="a" style="left:308px;top:530px;width:683px;height:21px;background:#bcc7d8;box-shadow:inset 3px 3px 5px rgba(40,55,80,.3)"></div>
<div class="t" style="left:321.5px;top:533.80px;font-size:11.1px;color:#1d2742;letter-spacing:-0.319px;">Drukarka domyślna</div>
<div class="a" style="left:415px;top:531px;width:566px;height:18px;background:linear-gradient(#fdfdfd,#f9f9fa 70%,#eceef1);border:1px solid #a0acbe;border-bottom:2px solid #7f8a9c"></div>
<div class="t" style="left:416.5px;top:534.00px;font-size:11.1px;color:#111a30;letter-spacing:-0.226px;">Universal Printer</div>
<div class="a" style="left:496px;top:532px;width:1px;height:14px;background:#111"></div>
<svg class="a" style="left:967px;top:537px;" width="8" height="5" viewBox="0 0 8 5"><path d="M0 0 H8 L4 4.5Z" fill="#1d2742"/></svg>
<div class="a" style="left:324px;top:553px;width:15px;height:14px;background:linear-gradient(#e6e9ee,#cdd3dd);border:1px solid #a9b3c3"></div>
<div class="t" style="left:341.5px;top:554.60px;font-size:11.1px;color:#1d2742;letter-spacing:-0.267px;">Kopie drukowane na papierze samokopiującym</div>
<div class="t" style="left:337.4px;top:574.20px;font-size:11.1px;color:#1d2742;letter-spacing:-0.179px;">Rejestr Kasowy</div>
<div class="a" style="left:415px;top:571px;width:566px;height:18px;background:#fff;border:1px solid #a0acbe"></div>
<div class="t" style="left:417.3px;top:575.55px;font-size:10.1px;color:#111a30;letter-spacing:-0.224px;">DOMYŚLNY UŻYTKOWNIKA</div>
<svg class="a" style="left:967px;top:577px;" width="8" height="5" viewBox="0 0 8 5"><path d="M0 0 H8 L4 4.5Z" fill="#1d2742"/></svg>
<div class="t" style="left:332.3px;top:593.70px;font-size:11.1px;color:#1d2742;letter-spacing:-0.322px;">Szybka sprzedaż</div>
<div class="a" style="left:416px;top:593px;width:15px;height:14px;background:linear-gradient(#e6e9ee,#cdd3dd);border:1px solid #a9b3c3"></div>
<div class="t" style="left:433.6px;top:595.20px;font-size:11.1px;color:#1d2742;letter-spacing:-0.185px;">Uruchamiaj w trybie &#x27;Szybkiej sprzedaży&#x27;</div>
<div class="t" style="left:323.9px;top:899.90px;font-size:11.1px;color:#1d2742;letter-spacing:-0.134px;">Wersja darmowa nie uruchomi się w trybie terminala produkcyjnego. W celu przetestowania funkcjonalności terminali produkcyjnych użyj</div>
<div class="t" style="left:323.9px;top:912.90px;font-size:11.1px;color:#1d2742;letter-spacing:-0.244px;">okna &#x27;Terminal&#x27; z modułu &#x27;Produkcja&#x27;.</div>
<div class="a" style="left:305px;top:947px;width:694px;height:40px;background:#eeeff3"></div>
<div class="a" style="left:783px;top:950px;width:100px;height:34px;background:linear-gradient(#f2f4f7,#e2e6ec 45%,#d2d8e2 55%,#c9d0dc);border:1px solid #d9c99a;border-radius:3px"></div>
<svg class="a" style="left:800px;top:960px;" width="14" height="14" viewBox="0 0 14 14"><circle cx="7" cy="7" r="6.8" fill="#3aa84a"/><path d="M3.5 7.2 L6 9.8 L10.5 4.5" fill="none" stroke="#fff" stroke-width="1.6"/></svg>
<div class="t" style="left:818.9px;top:962.00px;font-size:11.1px;color:#111a30;letter-spacing:-0.168px;">Zatwierdź</div>
<svg class="a" style="left:921px;top:960px;" width="14" height="14" viewBox="0 0 14 14"><circle cx="7" cy="7" r="6.8" fill="#e03a32"/><path d="M4.5 4.5 L9.5 9.5 M9.5 4.5 L4.5 9.5" stroke="#fff" stroke-width="1.8"/></svg>
<div class="t" style="left:940.7px;top:962.00px;font-size:11.1px;color:#111a30;letter-spacing:-0.159px;">Anuluj</div>
<svg class="a" style="left:0;top:0" width="1179" height="1040" viewBox="0 0 1179 1040"><defs>
<filter id="sh" x="-20%" y="-50%" width="140%" height="200%"><feDropShadow dx="1.5" dy="2" stdDeviation="2" flood-color="#000" flood-opacity="0.35"/></filter>
</defs>
<g filter="url(#sh)" fill="none" stroke="#fd0404" stroke-width="4">
<rect x="10" y="357" width="204" height="32.5" rx="6"/>
<rect x="244" y="254.2" width="722.5" height="25" rx="6"/>
<rect x="307" y="528.5" width="684" height="24" rx="6"/>
</g>
<g filter="url(#sh)">
<line x1="211.3" y1="388.5" x2="224.6" y2="430" stroke="#fd0404" stroke-width="2"/>
<circle cx="211.3" cy="388.5" r="4" fill="#fd0404"/>
<circle cx="228.6" cy="443.5" r="13.4" fill="rgba(205,10,18,0.86)" stroke="#fd0404" stroke-width="2.2"/>
<line x1="276.6" y1="231" x2="286.5" y2="254.7" stroke="#fd0404" stroke-width="2"/>
<circle cx="286.5" cy="254.7" r="4.8" fill="#fd0404"/>
<circle cx="271.6" cy="216.6" r="13.6" fill="rgba(212,30,36,0.9)" stroke="#fd0404" stroke-width="2.2"/>
<line x1="654.3" y1="551.7" x2="703.5" y2="607.2" stroke="#fd0404" stroke-width="2"/>
<circle cx="654.3" cy="551.7" r="5" fill="#fd0404"/>
<circle cx="713.5" cy="620" r="13.8" fill="rgba(212,30,36,0.9)" stroke="#fd0404" stroke-width="2.2"/>
</g>
<g fill="#fff" stroke="#fff" stroke-width="0.35" font-family="Liberation Sans" font-size="15" text-anchor="middle">
<text x="229.2" y="449">1</text>
<text x="271.6" y="222">2</text>
<text x="713.8" y="625.5">3</text>
</g></svg>
<div class="a" style="left:0px;top:1022px;width:1179px;height:18px;background:linear-gradient(#eceef2,#e4e7ec 45%,#dadee6 55%,#d9dde5)"></div>
<div class="a" style="left:592px;top:1023px;width:1px;height:17px;background:#c4cad4"></div>
<div class="t" style="left:5px;top:1026.37px;font-size:10.9px;color:#2b3550;letter-spacing:-0.005px;">Copyright © 2005-2024 RHO Software</div>
<div class="t" style="left:597px;top:1026.37px;font-size:10.9px;color:#2b3550;letter-spacing:0.083px;">Modus demo v.5.0.0.453</div>
</body></html>
